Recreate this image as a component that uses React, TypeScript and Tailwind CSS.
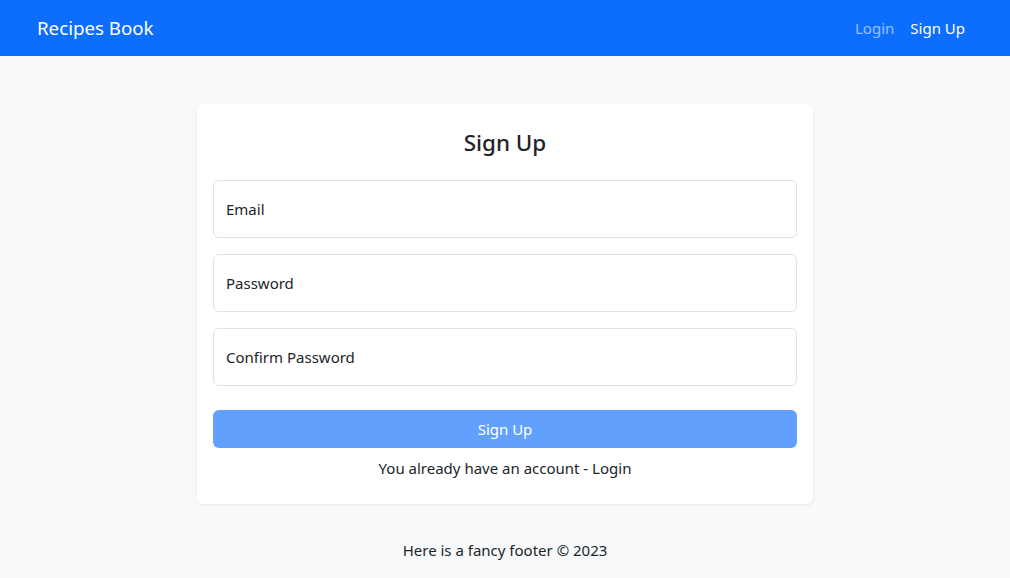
export default function App() {
  const fields = ["Email", "Password", "Confirm Password"];
  return (
    <div
      className="min-h-[578px] bg-[#f8f9fa] text-[#212529]"
      style={{ fontFamily: '"Noto Sans", "Open Sans", sans-serif' }}
    >
      <nav className="flex h-14 items-center justify-between bg-[#0d6efd] pl-[37px] pr-[45px] pt-px">
        <a className="text-[18.7px] text-white">Recipes Book</a>
        <div className="flex items-center gap-4 text-[15px]">
          <a className="text-white/55">Login</a>
          <a className="text-white">Sign Up</a>
        </div>
      </nav>

      <main className="flex justify-center pt-12">
        <div className="w-[616px] rounded-md bg-white px-4 pb-6 pt-[23px] shadow-[0_1px_3px_rgba(0,0,0,0.08)]">
          <h3 className="mb-[21px] text-center text-[22.4px] font-medium leading-8">Sign Up</h3>
          <form className="flex flex-col gap-4">
            {fields.map((f) => (
              <label
                key={f}
                className="flex h-[58px] items-center rounded-md border border-[#dee2e6] px-3 text-[15px]"
              >
                {f}
              </label>
            ))}
            <button
              type="button"
              className="mt-2 h-[38px] rounded-md bg-[#62a0fd] text-[15px] text-white"
            >
              Sign Up
            </button>
          </form>
          <p className="mt-2 text-center text-[15px] leading-6">
            You already have an account - <a>Login</a>
          </p>
        </div>
      </main>

      <footer className="pt-[34px] text-center text-[15px] leading-6">
        Here is a fancy footer © 2023
      </footer>
    </div>
  );
}
